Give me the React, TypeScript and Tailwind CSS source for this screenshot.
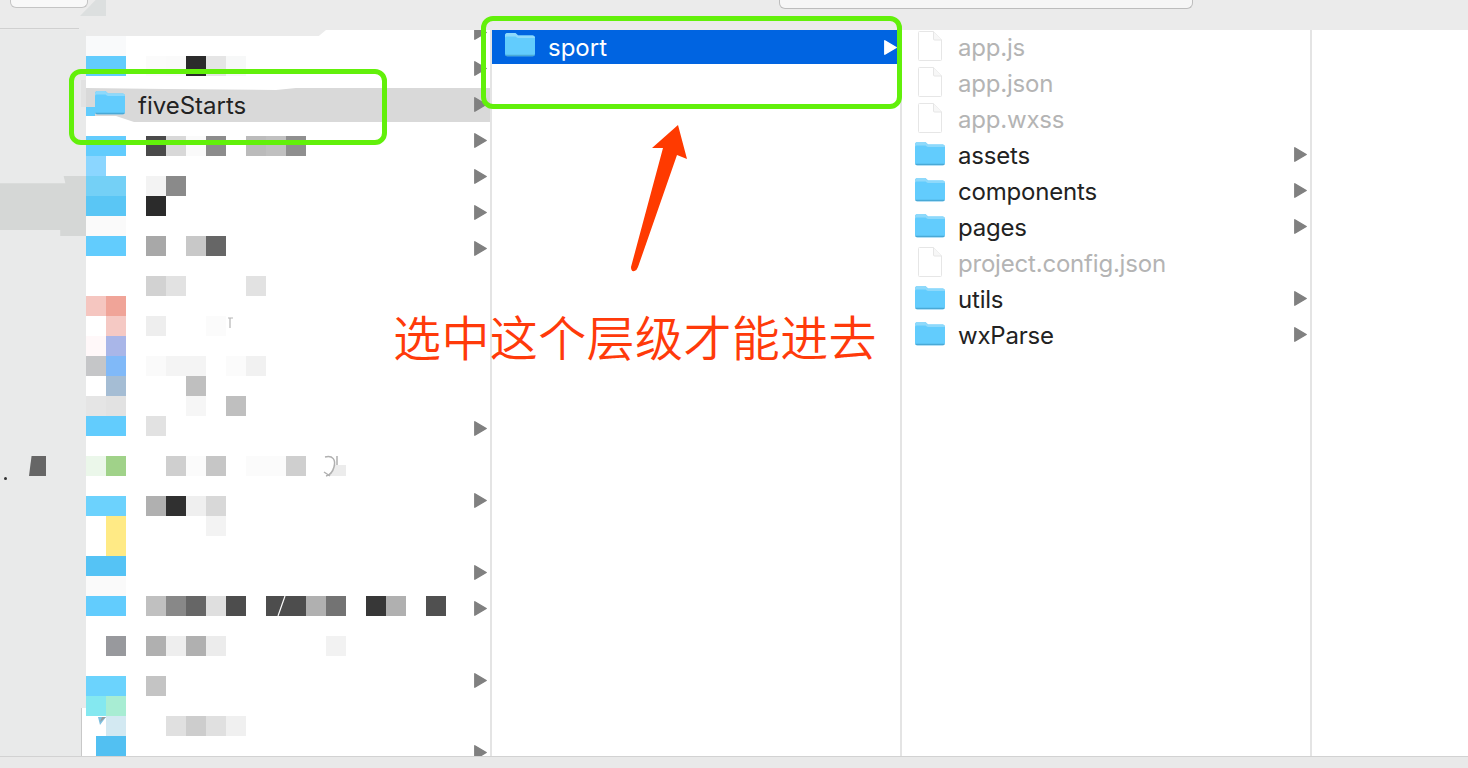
const SANS = "font-['Inter','Liberation_Sans',sans-serif]";

// blurred-out rows of the first column: [row, col, colour], 20px grid starting at x=86 y=36
const MOSAIC: [number, number, string][] = [
  [0, 0, "#f9fafb"], [0, 1, "#f9fafb"],
  [1, 0, "#62ccfd"], [1, 1, "#62ccfd"], [1, 3, "#fbfbfb"], [1, 4, "#fafafa"], [1, 5, "#2b2b2b"], [1, 6, "#e5e5e5"], [1, 7, "#f7f8f8"],
  [5, 0, "#62ccfd"], [5, 1, "#62ccfd"], [5, 3, "#4a4a4a"], [5, 4, "#d8d8d8"], [5, 5, "#fafafa"], [5, 6, "#8c8c8c"], [5, 8, "#bbbbbb"], [5, 9, "#c0c0c0"], [5, 10, "#8f8f8f"],
  [6, 0, "#8bd6ff"],
  [7, 0, "#74d0f6"], [7, 1, "#74d0f6"], [7, 3, "#f3f3f3"], [7, 4, "#8a8a8a"],
  [8, 0, "#5ac6f5"], [8, 1, "#5ac6f5"], [8, 3, "#2b2b2b"],
  [9, 0, "#fafafa"], [9, 1, "#fafafa"],
  [10, 0, "#62ccfd"], [10, 1, "#62ccfd"], [10, 3, "#a8a8a8"], [10, 5, "#c8c8c8"], [10, 6, "#666666"],
  [12, 3, "#d2d2d2"], [12, 4, "#e2e2e2"], [12, 8, "#e2e2e2"],
  [13, 0, "#f5c6c0"], [13, 1, "#f0a498"],
  [14, 1, "#f5c9c4"], [14, 3, "#eeeeee"], [14, 6, "#fbfbfb"],
  [15, 0, "#fff8f9"], [15, 1, "#a9b6e8"],
  [16, 0, "#c5c6c8"], [16, 1, "#80b9f8"], [16, 3, "#fafafa"], [16, 4, "#f4f4f4"], [16, 5, "#f4f4f4"], [16, 7, "#fbfbfb"], [16, 8, "#f1f1f1"],
  [17, 1, "#a5bdd4"], [17, 5, "#bfbfbf"],
  [18, 0, "#e5e5e5"], [18, 1, "#e2e2e2"], [18, 5, "#f6f6f6"], [18, 7, "#bfbfbf"],
  [19, 0, "#62ccfd"], [19, 1, "#62ccfd"], [19, 3, "#e2e2e2"],
  [21, 0, "#ebf7ea"], [21, 1, "#a0d289"], [21, 4, "#cfcfcf"], [21, 5, "#fbfbfb"], [21, 6, "#c6c6c6"], [21, 8, "#fbfbfb"], [21, 9, "#fbfbfb"], [21, 10, "#cfcfcf"],
  [23, 0, "#6cd2fd"], [23, 1, "#6cd2fd"], [23, 3, "#b0b0b0"], [23, 4, "#303030"], [23, 5, "#efefef"], [23, 6, "#d8d8d8"],
  [24, 1, "#ffea85"], [24, 6, "#f3f3f3"],
  [25, 1, "#ffea85"],
  [26, 0, "#55c3f5"], [26, 1, "#55c3f5"],
  [27, 0, "#fafafa"], [27, 1, "#fafafa"],
  [28, 0, "#62ccfd"], [28, 1, "#62ccfd"], [28, 3, "#c0c0c0"], [28, 4, "#888888"], [28, 5, "#666666"], [28, 6, "#dfdfdf"], [28, 7, "#4d4d4d"], [28, 9, "#4d4d4d"], [28, 10, "#4d4d4d"], [28, 11, "#b0b0b0"], [28, 12, "#737373"], [28, 14, "#373737"], [28, 15, "#b0b0b0"], [28, 17, "#505050"],
  [30, 1, "#98999d"], [30, 3, "#b0b0b0"], [30, 4, "#eeeeee"], [30, 5, "#b0b0b0"], [30, 6, "#ececec"], [30, 12, "#f2f2f2"],
  [32, 0, "#6bd3fd"], [32, 1, "#6bd3fd"], [32, 3, "#c4c4c4"],
  [33, 0, "#84e8f0"], [33, 1, "#a8edd3"],
  [34, 1, "#d3e9f2"], [34, 4, "#e0e0e0"], [34, 5, "#cdcdcd"], [34, 6, "#e0e0e0"], [34, 7, "#f0f0f0"],
  [35, 0, "#52c0f2"], [35, 1, "#52c0f2"],
];

const COL1_ARROWS = [32, 68, 140, 176, 212, 248, 428, 500, 572, 608, 680, 752];

const FILES = [
  { name: "app.js", folder: false },
  { name: "app.json", folder: false },
  { name: "app.wxss", folder: false },
  { name: "assets", folder: true },
  { name: "components", folder: true },
  { name: "pages", folder: true },
  { name: "project.config.json", folder: false },
  { name: "utils", folder: true },
  { name: "wxParse", folder: true },
];

function Folder() {
  return (
    <svg width="32" height="25" viewBox="0 0 32 25" className="shrink-0 mb-[5px]">
      <path d="M1 3.4C1 2 2 1 3.4 1h6.8c1.2 0 1.8.4 2.6 1.2L14 3.6H28.6C30 3.6 31 4.6 31 6v15.8c0 1.4-1 2.4-2.4 2.4H3.4C2 24.2 1 23.2 1 21.8Z" fill="#62ccfd" />
      <path d="M1 3.4C1 2 2 1 3.4 1h6.8c1.2 0 1.8.4 2.6 1.2L14 3.6H28.6C30 3.6 31 4.6 31 6H14.4c-1 0-1.6-.3-2.2-.9l-.6-.6H3C1.8 4.500 1 5 1 6.500Z" fill="#8ed9fb" />
      <path d="M1 22.800h30c-.2 .9-1.100 1.500-2.400 1.500H3.400C2.100 24.300 1.200 23.700 1 22.800Z" fill="#4aa9d6" />
    </svg>
  );
}

function FileIcon() {
  return (
    <svg width="26" height="32" viewBox="0 0 26 32" className="shrink-0 mb-[4px]">
      <path d="M1.500 2.500a1 1 0 0 1 1-1h14l8 8.500v19.500a1 1 0 0 1-1 1h-21a1 1 0 0 1-1-1Z" fill="#fff" stroke="#e6e6e6" />
      <path d="M16.500 1.500v7.500a1 1 0 0 0 1 1h7" fill="#f7f7f7" stroke="#e6e6e6" />
    </svg>
  );
}

function Arrow({ white }: { white?: boolean }) {
  const color = white ? "#ffffff" : "#808080";
  return (
    <svg width="13" height="15" viewBox="0 0 13 15" className="shrink-0 -mr-[1px]">
      <path d="M.8 .8 12.200 7.500 .8 14.200Z" fill={color} stroke={color} strokeWidth="1.400" strokeLinejoin="round" />
    </svg>
  );
}

function FirstColumn() {
  return (
    <div className="relative w-[404px] h-full bg-white overflow-hidden">
      <div className="grid grid-cols-[repeat(19,20px)] grid-rows-[repeat(36,20px)] mt-[6px]">
        {MOSAIC.map(([row, col, color]) => (
          <div
            key={`${row}-${col}`}
            style={{ gridRow: row + 1, gridColumn: col + 1, background: color }}
          />
        ))}
      </div>
      {/* arrows sit on the blurred rows */}
      {COL1_ARROWS.map((y) => (
        <div key={y} className="absolute left-[388px]" style={{ top: y - 37 }}>
          <Arrow />
        </div>
      ))}
    </div>
  );
}

function SportColumn() {
  return (
    <div className="w-[408px] h-full bg-white">
      <div className="h-[34px] bg-[#0064e1] flex items-center pl-[12px] pr-[4px]">
        <Folder />
        <span className={`ml-[12px] pt-[2px] flex-1 text-[24px] text-white ${SANS}`}>sport</span>
        <Arrow white />
      </div>
    </div>
  );
}

function FilesColumn() {
  return (
    <div className="w-[408px] h-full bg-white pl-[12px] pr-[4px]">
      {FILES.map((f) => (
        <div key={f.name} className="h-[36px] flex items-center">
          <div className="w-[32px] flex justify-center">{f.folder ? <Folder /> : <FileIcon />}</div>
          <span className={`ml-[12px] flex-1 text-[24px] tracking-[-0.2px] ${SANS} ${f.folder ? "text-[#222222]" : "text-[#b4b4b4]"}`}>
            {f.name}
          </span>
          {f.folder && <div className="mb-[4px]"><Arrow /></div>}
        </div>
      ))}
    </div>
  );
}

export default function App() {
  return (
    <div className="relative w-[1468px] h-[768px] overflow-hidden bg-[#ebebeb] flex flex-col">
      {/* toolbar with the cut-off search fields */}
      <div className="h-[30px] shrink-0 bg-[#ebebeb] flex items-start">
        <div className="ml-[10px] w-[78px] h-[8px] bg-[#f8f8f8] border border-t-0 border-[#c4c4c4] rounded-b-[6px]" />
        <div className="ml-[691px] w-[414px] h-[9px] bg-[#f6f6f6] border border-t-0 border-[#bdbdbd] rounded-b-[6px]" />
      </div>

      <div className="flex-1 min-h-0 flex">
        <div className="w-[86px] h-full bg-[#e9eaea]" />
        <FirstColumn />
        <div className="w-[2px] h-full bg-[#e4e4e4]" />
        <SportColumn />
        <div className="w-[2px] h-full bg-[#e4e4e4]" />
        <FilesColumn />
        <div className="w-[2px] h-full bg-[#e4e4e4]" />
        <div className="flex-1 h-full bg-white" />
      </div>

      <div className="h-[12px] shrink-0 bg-[#e9e9e9] border-t border-[#d2d2d2]" />

      {/* smudges left by the blur tool */}
      <div className="absolute left-0 top-[28px] w-[79px] h-[1px] bg-[#d0d0d0]" />
      <div className="absolute left-[80px] top-0 w-[26px] h-[16px] bg-[#dcdfdf] [clip-path:polygon(60%_0,100%_0,100%_100%,0_100%)]" />
      <div className="absolute left-[86px] top-[16px] w-[240px] h-[20px] bg-[#ebebeb] [clip-path:polygon(0_0,100%_0,100%_70%,97%_100%,0_100%)]" />
      <div className="absolute left-0 top-[176px] w-[86px] h-[60px] bg-[#d5d7d6] [clip-path:polygon(0_12%,76%_12%,74%_0,100%_0,100%_100%,70%_100%,70%_90%,0_90%)]" />
      <div className="absolute left-[29px] top-[456px] w-[17px] h-[20px] bg-[#666666] [clip-path:polygon(15%_0,100%_0,100%_100%,0_100%)]" />
      <div className="absolute left-[4px] top-[477px] w-[3px] h-[3px] rounded-full bg-[#333333]" />

      {/* stray bits of the blurred names */}
      <svg className="absolute left-[224px] top-[314px]" width="12" height="18" viewBox="0 0 12 18">
        <path d="M4 4h5M6 4v10" stroke="#b5b5b5" strokeWidth="1.200" fill="none" />
      </svg>
      <svg className="absolute left-[320px] top-[454px]" width="28" height="24" viewBox="0 0 28 24">
        <path d="M15 11h11v11H8Z" fill="#ececec" />
        <path d="M5 3c8-2 11 3 9 10-1 4-4 8-8 9M4 18l6 4M17 2v9" stroke="#b0b0b0" strokeWidth="1.500" fill="none" />
      </svg>
      <svg className="absolute left-[276px] top-[596px]" width="12" height="20" viewBox="0 0 12 20">
        <path d="M9 0 2 20" stroke="#ffffff" strokeWidth="1.200" />
      </svg>

      {/* torn corner at the bottom of the first column */}
      <div className="absolute left-[81px] top-[708px] w-[5px] h-[48px] bg-white border-l border-[#c8c8c8]" />
      <div className="absolute left-[86px] top-[736px] w-[10px] h-[20px] bg-white" />
      <svg className="absolute left-[86px] top-[707px]" width="24" height="24" viewBox="0 0 24 24">
        <path d="M12 10h8l-6 8Z" fill="#7dc0e0" />
        <path d="M16 10h4l-6 5Z" fill="#9a9a9a" />
      </svg>

      {/* selected row in the first column */}
      <div className="absolute left-[81px] top-[80px] w-[5px] h-[27px] bg-[#e2e2e2]" />
      <div className="absolute left-[86px] top-[88px] w-[404px] h-[34px] bg-[#d9d9d9] flex items-center pl-[8px] pr-[4px] [clip-path:polygon(0_0,80px_1px,190px_2px,210px_0,100%_0,100%_100%,48px_100%,30px_28px,0_28px)]">
        <Folder />
        <span className={`ml-[12px] pt-[2px] flex-1 text-[24px] text-[#222222] ${SANS}`}>fiveStarts</span>
        <div className="mb-[2px]"><Arrow /></div>
      </div>
      <div className="absolute left-[86px] top-[107px] w-[9px] h-[9px] bg-[#62ccfd]" />

      {/* annotations */}
      <div className="absolute left-[69px] top-[69px] w-[318px] h-[76px] border-[5px] border-[#62f00a] rounded-[12px]" />
      <div className="absolute left-[481px] top-[16px] w-[421px] h-[93px] border-[5px] border-[#62f00a] rounded-[12px]" />
      <svg className="absolute left-[625px] top-[120px]" width="70" height="155" viewBox="0 0 70 155">
        <path d="M53 5 27 28H38L6 147Q6 152 9.500 151 12 150 13 147L52 35 62 39Z" fill="#ff3a00" />
      </svg>
      <div className="absolute left-[393px] top-[302px] text-[48px] leading-[66px] font-[350] whitespace-nowrap tracking-[0.4px] text-[#ff3a0a] font-['Noto_Sans_CJK_SC',sans-serif]">
        选中这个层级才能进去
      </div>
    </div>
  );
}
